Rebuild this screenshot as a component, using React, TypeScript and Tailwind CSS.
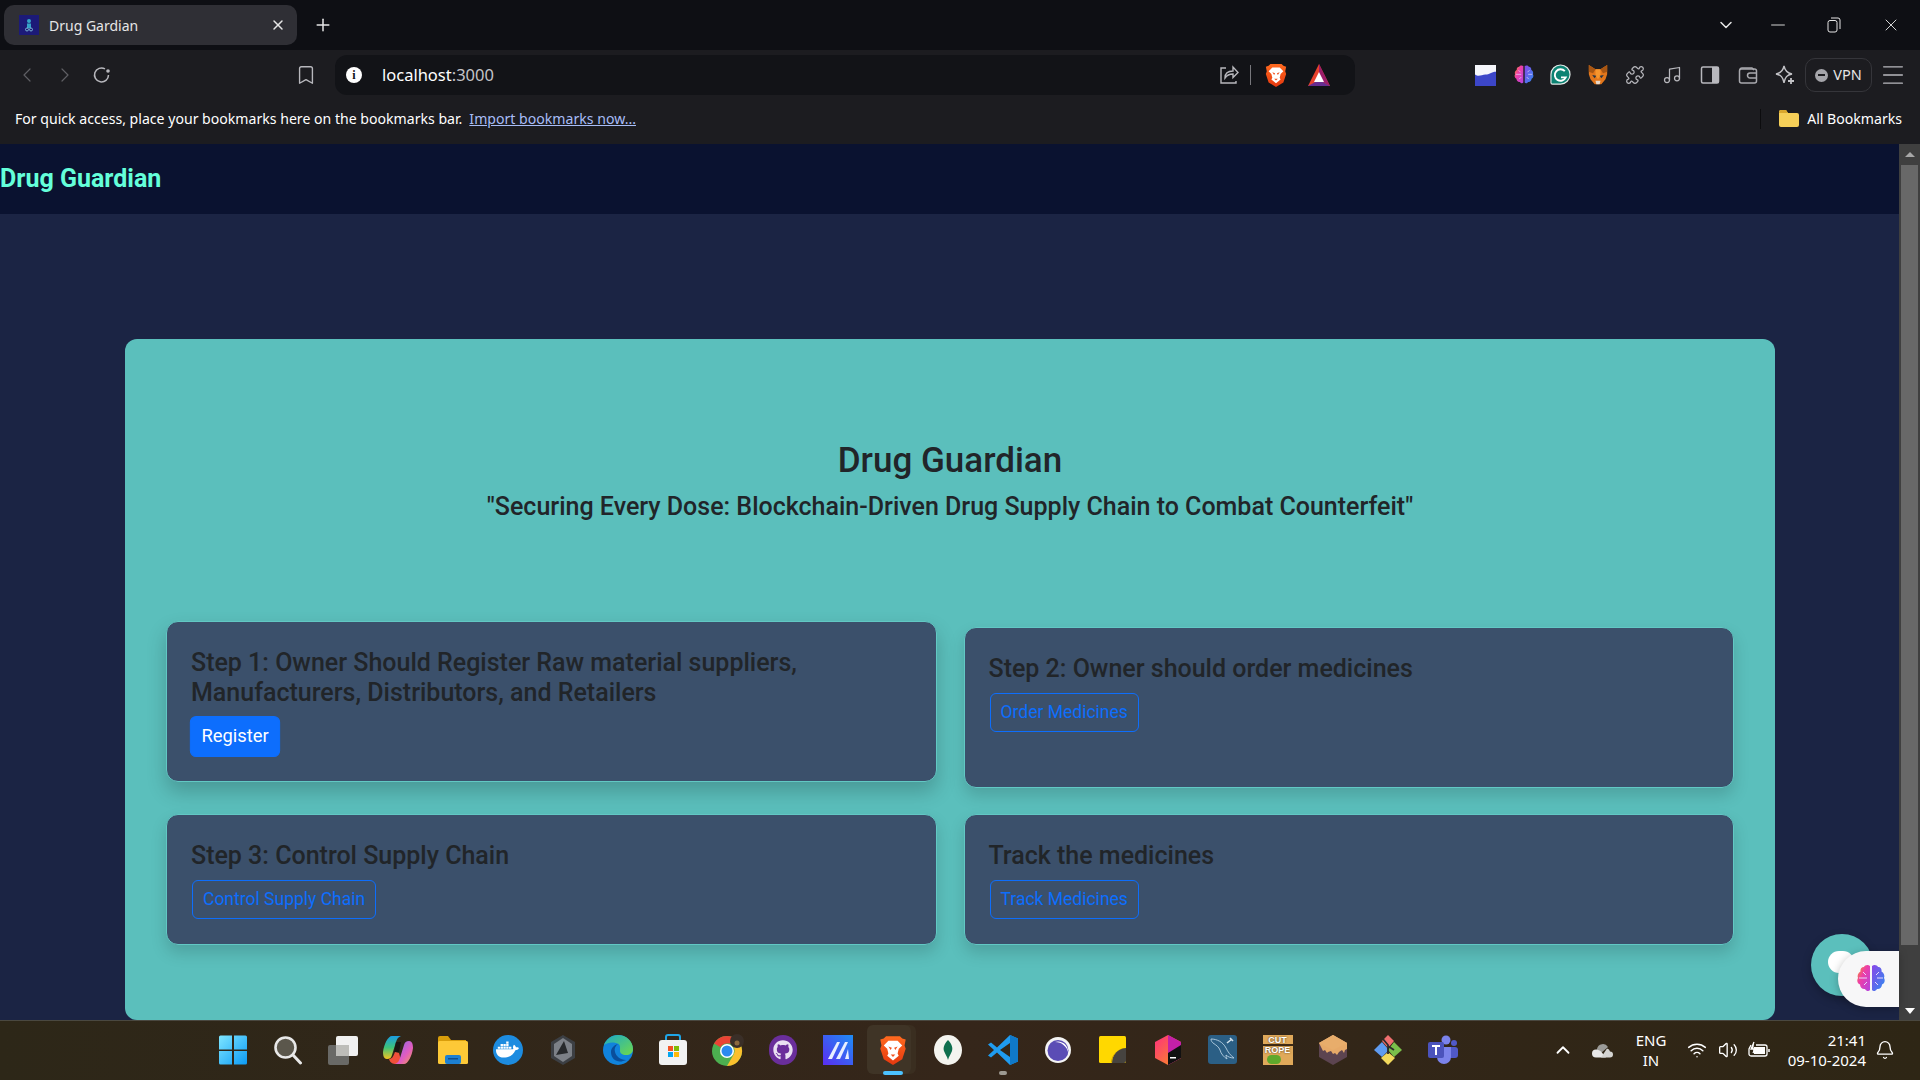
import { Bell, Bookmark, ChevronDown, ChevronLeft, ChevronRight, ChevronUp, Menu, Minus, Music, Plus, Puzzle, Volume2, Wifi, X } from 'lucide-react';
import { FaDocker, FaGithub } from 'react-icons/fa6';

function BrainIcon({ size = 26 }: { size?: number }) {
  return (
    <svg width={size} height={size} viewBox="0 0 32 32">
      <defs>
        <linearGradient id="brainL" x1="0" y1="0" x2="1" y2="1">
          <stop offset="0" stopColor="#f7941d" />
          <stop offset="0.4" stopColor="#ee3fa6" />
          <stop offset="1" stopColor="#b443e0" />
        </linearGradient>
        <linearGradient id="brainR" x1="0" y1="0" x2="1" y2="1">
          <stop offset="0" stopColor="#8a46e8" />
          <stop offset="1" stopColor="#2f8cf0" />
        </linearGradient>
      </defs>
      <path d="M15 3c-2-1.600-5-1-6 1-2.500 0-4 2-3.500 4.500C3 10 2 12.500 3 15c-1.500 2.500-.5 5.500 2 6.500 0 3 2.500 5 5 4.500 1.500 2.500 4 2.500 5 1z" fill="url(#brainL)" />
      <path d="M17 3c2-1.600 5-1 6 1 2.500 0 4 2 3.500 4.500C29 10 30 12.500 29 15c1.500 2.500.5 5.500-2 6.500 0 3-2.500 5-5 4.500-1.500 2.500-4 2.500-5 1z" fill="url(#brainR)" />
      <path d="M4 15h8M8 9l3 3M9 22l3-3M28 15h-6M24 9l-3 3M23 22l-3-3" stroke="#e9d8fb" strokeWidth="1" fill="none" />
    </svg>
  );
}

function BraveLion({ size = 24 }: { size?: number }) {
  return (
    <svg width={size} height={size} viewBox="0 0 24 26">
      <defs>
        <linearGradient id="braveG" x1="0" y1="0" x2="0" y2="1">
          <stop offset="0" stopColor="#ff6a1f" />
          <stop offset="1" stopColor="#e5380f" />
        </linearGradient>
      </defs>
      <path d="M6 1h12l2 2 3 1-1 5 1 3-3 9-8 5-8-5-3-9 1-3-1-5 3-1z" fill="url(#braveG)" />
      <path d="M8 5h8l4 4-3 3-1 4 1 2-5 4-5-4 1-2-1-4-3-3z" fill="#fff" />
      <path d="M8 10l3 1-1 2zM16 10l-3 1 1 2zM10 17h4l-2 2z" fill="#f1521f" />
    </svg>
  );
}

function BatIcon() {
  return (
    <svg width="24" height="24" viewBox="0 0 24 24">
      <polygon points="12,1 23,23 1,23" fill="#e8412c" />
      <polygon points="12,1 23,23 12,17" fill="#9b1d6a" />
      <polygon points="1,23 23,23 12,17" fill="#662d91" />
      <polygon points="12,9 17,19 7,19" fill="#fff" />
    </svg>
  );
}

function FoxIcon() {
  return (
    <svg width="20" height="20" viewBox="0 0 24 24">
      <polygon points="1,0 9,5 15,5 23,0 23,11 21,17 16,23 8,23 3,17 1,11" fill="#e2761b" />
      <polygon points="9,5 15,5 15,13 12,17 9,13" fill="#f6952d" />
      <polygon points="1,0 9,5 6,10 1,8" fill="#a85613" />
      <polygon points="23,0 15,5 18,10 23,8" fill="#a85613" />
      <polygon points="5,12 10,13 8,16" fill="#233447" />
      <polygon points="19,12 14,13 16,16" fill="#233447" />
      <polygon points="9,19 15,19 14,23 10,23" fill="#e8d8c8" />
    </svg>
  );
}

function GIcon() {
  return (
    <svg width="21" height="22" viewBox="0 0 22 23">
      <path d="M11 1a10 10 0 1 1 0 20H2.500A1.500 1.500 0 0 1 1 19.500V11A10 10 0 0 1 11 1z" fill="#0d8373" stroke="#e3ebe9" strokeWidth="1.200" />
      <path d="M15.500 7.500a6 6 0 1 0 1 6.500h-5" fill="none" stroke="#fff" strokeWidth="2" />
    </svg>
  );
}

function Ext1() {
  return (
    <svg width="21" height="21" viewBox="0 0 22 22">
      <rect width="22" height="22" fill="#f5f6fb" />
      <path d="M0 10c4 3 7 0 11 0 4 0 6-3 11-3v15H0z" fill="#3c46c8" />
    </svg>
  );
}

function ReloadIcon() {
  return (
    <svg width="20" height="20" viewBox="0 0 20 20" fill="none" stroke="#b8b8bd" strokeWidth="1.500">
      <path d="M16.500 10a7 7 0 1 1-3.500-6.100" />
      <circle cx="16" cy="6" r="1.800" fill="#b8b8bd" stroke="none" />
    </svg>
  );
}

function ShareIcon() {
  return (
    <svg width="20" height="20" viewBox="0 0 20 20" fill="none" stroke="#b8b8bd" strokeWidth="1.400">
      <path d="M7 3H2v15h15v-2" />
      <path d="M6 13c0-5 3-7 8-7V2l5 5.500-5 5V9c-4 0-6 1-8 4z" />
    </svg>
  );
}

function SidebarIcon() {
  return (
    <svg width="20" height="20" viewBox="0 0 20 20">
      <rect x="1.500" y="2" width="17" height="16" rx="1.500" fill="none" stroke="#b8b8bd" strokeWidth="1.500" />
      <rect x="12" y="2" width="6.500" height="16" fill="#b8b8bd" />
    </svg>
  );
}

function WalletIcon() {
  return (
    <svg width="20" height="20" viewBox="0 0 20 20" fill="none" stroke="#a9a9ae" strokeWidth="1.500">
      <path d="M2 5a2 2 0 0 1 2-2h10l2 2" />
      <rect x="1.500" y="4" width="17" height="14" rx="2" />
      <path d="M18.500 8H12a2 2 0 0 0 0 5h6.500" />
    </svg>
  );
}

function SparkleIcon() {
  return (
    <svg width="20" height="20" viewBox="0 0 20 20" fill="none" stroke="#c2c2c6" strokeWidth="1.400">
      <path d="M9 1c1 5 3 7 8 8-5 1-7 3-8 9-1-6-3-8-8-9 5-1 7-3 8-8z" />
      <path d="M16 13v6M13 16h6" strokeWidth="1.800" />
    </svg>
  );
}

function RestoreIcon() {
  return (
    <svg width="14" height="16" viewBox="0 0 14 16" fill="none" stroke="#e6e6e6" strokeWidth="1">
      <rect x="1" y="3.500" width="9" height="11.500" rx="2" />
      <path d="M4 1h7a2 2 0 0 1 2 2v9" />
    </svg>
  );
}

function Favicon() {
  return (
    <svg width="20" height="20" viewBox="0 0 20 20">
      <rect width="20" height="20" fill="#1c1a78" />
      <circle cx="10" cy="6" r="2" fill="#35a3c8" />
      <rect x="8" y="8.500" width="4" height="4.500" fill="#35a3c8" />
      <circle cx="8" cy="14.500" r="1.500" fill="none" stroke="#8bd1e6" strokeWidth="0.800" />
      <circle cx="12" cy="14.500" r="1.500" fill="none" stroke="#8bd1e6" strokeWidth="0.800" />
    </svg>
  );
}

function TaskWindows() {
  return (
    <svg width="30" height="30" viewBox="0 0 30 30">
      <defs>
        <linearGradient id="winG" x1="0" y1="0" x2="1" y2="1">
          <stop offset="0" stopColor="#7fe6ff" />
          <stop offset="1" stopColor="#0c9bf5" />
        </linearGradient>
      </defs>
      <path d="M1 2a1.500 1.500 0 0 1 1.500-1.500h11.500v14H1zM16 .5h11.500A1.500 1.500 0 0 1 29 2v12.500H16zM1 16h13v13.500H2.500A1.500 1.500 0 0 1 1 28zM16 16h13v12a1.500 1.500 0 0 1-1.500 1.500H16z" fill="url(#winG)" />
    </svg>
  );
}

function TaskSearch() {
  return (
    <svg width="30" height="30" viewBox="0 0 30 30">
      <circle cx="12.500" cy="12.500" r="10" fill="#5b574c" stroke="#e8e8e8" strokeWidth="2.600" />
      <path d="M20 20l7.500 8" stroke="#e8e8e8" strokeWidth="3" strokeLinecap="round" />
    </svg>
  );
}

function TaskView() {
  return (
    <svg width="32" height="32" viewBox="0 0 32 32">
      <rect x="1" y="11" width="21" height="20" rx="2" fill="#696966" />
      <rect x="9" y="2" width="22" height="20" rx="2" fill="#f1f1f1" />
      <rect x="9" y="11" width="13" height="11" fill="#bdbdb9" />
    </svg>
  );
}

function TaskCopilot() {
  return (
    <svg width="30" height="30" viewBox="0 0 30 30">
      <defs>
        <linearGradient id="copA" x1="0" y1="0" x2="0" y2="1">
          <stop offset="0" stopColor="#1b9de2" />
          <stop offset="0.5" stopColor="#3dc27a" />
          <stop offset="1" stopColor="#f4c41f" />
        </linearGradient>
        <linearGradient id="copB" x1="0" y1="0" x2="1" y2="1">
          <stop offset="0" stopColor="#7b6cf0" />
          <stop offset="0.6" stopColor="#e25cc0" />
          <stop offset="1" stopColor="#f0a04d" />
        </linearGradient>
      </defs>
      <path d="M13 29c-3 0-6-1-7-5 3 0 4-2 6-7l4 1 3 11z" fill="#f0503a" />
      <path d="M9 1h9c-3 1-4 3-5 6l-4 13c-1 3-2 4-5 4-3 0-4-3-4-7C1 9 5 1 9 1z" fill="url(#copA)" />
      <path d="M21 29h-9c3-1 4-3 5-6l4-13c1-3 2-4 5-4 3 0 4 3 4 7-1 8-5 16-9 16z" fill="url(#copB)" />
      <path d="M13 7h5l-2 10h-5z" fill="#1a1512" />
    </svg>
  );
}

function TaskExplorer() {
  return (
    <svg width="30" height="30" viewBox="0 0 30 30">
      <path d="M0 3a2 2 0 0 1 2-2h8l3 4h15v6H0z" fill="#d99e0b" />
      <rect y="6" width="30" height="23" rx="1.500" fill="#fdc937" />
      <rect x="7" y="20" width="16" height="9" rx="2" fill="#1d80d2" />
      <rect x="10" y="23" width="10" height="1.500" fill="#0f4f8e" />
    </svg>
  );
}

function TaskDocker() {
  return (
    <span className="flex h-[30px] w-[30px] items-center justify-center rounded-full bg-[#1d8ce0]">
      <FaDocker size={23} color="#fff" />
    </span>
  );
}

function TaskHex() {
  return (
    <svg width="26" height="30" viewBox="0 0 26 30">
      <polygon points="13,0 25,7 25,23 13,30 1,23 1,7" fill="#3c3f44" />
      <polygon points="13,3 22,9 22,21 13,27 4,21 4,9" fill="#7c8087" />
      <polygon points="14,6 18,18 6,20" fill="#27292c" />
    </svg>
  );
}

function TaskEdge() {
  return (
    <svg width="30" height="30" viewBox="0 0 30 30">
      <defs>
        <linearGradient id="edgeA" x1="0" y1="0" x2="1" y2="1">
          <stop offset="0" stopColor="#1aa9c9" />
          <stop offset="1" stopColor="#6fd94b" />
        </linearGradient>
      </defs>
      <circle cx="15" cy="15" r="15" fill="#1183dc" />
      <path d="M1 10C3 4 9 0 15 0c8 0 15 6 15 14 0 4-3 6-7 6-4 0-6-2-6-4 0-4 1-7-4-8-5-1-9 0-12 2z" fill="url(#edgeA)" />
      <path d="M20 26c-6 2-12-2-12-9 0-4 3-7 7-8-3 2-4 5-3 8 1 4 5 8 11 8 2 0 4-1 6-3-2 2-5 3-9 4z" fill="#0a4e9b" />
    </svg>
  );
}

function TaskStore() {
  return (
    <svg width="30" height="32" viewBox="0 0 30 32">
      <path d="M8 7V3a2 2 0 0 1 2-2h10a2 2 0 0 1 2 2v4" fill="none" stroke="#1fa5e6" strokeWidth="2" />
      <rect x="1" y="6" width="28" height="25" rx="3" fill="#f2f2f2" />
      <rect x="10" y="12" width="5" height="5" fill="#f35325" />
      <rect x="16" y="12" width="5" height="5" fill="#81bc06" />
      <rect x="10" y="18" width="5" height="5" fill="#05a6f0" />
      <rect x="16" y="18" width="5" height="5" fill="#ffba08" />
    </svg>
  );
}

function TaskChrome() {
  return (
    <svg width="32" height="32" viewBox="0 0 32 32">
      <circle cx="15" cy="17" r="15" fill="#4caf50" />
      <path d="M15 2a15 15 0 0 1 13 7.500H15a7.500 7.500 0 0 0-6.500 3.700L2 9.500A15 15 0 0 1 15 2z" fill="#ea4335" />
      <path d="M28 9.500A15 15 0 0 1 15 32l6.500-11.300A7.500 7.500 0 0 0 21.500 13z" fill="#fbc02d" />
      <circle cx="15" cy="17" r="7" fill="#fff" />
      <circle cx="15" cy="17" r="5.500" fill="#2b8af0" />
      <circle cx="25" cy="7" r="7" fill="#3a2f28" />
      <circle cx="25" cy="9" r="2.500" fill="#8c6a3f" />
    </svg>
  );
}

function TaskGithub() {
  return (
    <span className="flex h-[30px] w-[28px] items-center justify-center rounded-full bg-[#6a2e9b]">
      <FaGithub size={20} color="#e9e0f2" />
    </span>
  );
}

function TaskLinear() {
  return (
    <svg width="30" height="30" viewBox="0 0 30 30">
      <defs>
        <linearGradient id="linA" x1="0" y1="1" x2="1" y2="0">
          <stop offset="0" stopColor="#5a2df0" />
          <stop offset="1" stopColor="#1e8df5" />
        </linearGradient>
      </defs>
      <rect width="30" height="30" fill="url(#linA)" />
      <polygon points="5,24 14,7 17,7 9,24" fill="#e8efff" />
      <polygon points="13,24 22,7 25,7 17,24" fill="#e8efff" />
      <polygon points="22,24 25,14 26,24" fill="#e8efff" />
    </svg>
  );
}

function TaskCompass() {
  return (
    <svg width="28" height="30" viewBox="0 0 28 30">
      <ellipse cx="14" cy="15" rx="14" ry="15" fill="#f4f4ef" />
      <path d="M14 5c4 4 5 8 4 11-1 3-3 5-4 9-1-4-3-6-4-9-1-3 0-7 4-11z" fill="#0f6f4e" />
    </svg>
  );
}

function TaskVscode() {
  return (
    <svg width="30" height="30" viewBox="0 0 30 30">
      <path d="M22 0l8 3.500v23L22 30 9 17.500 3 22.500 0 20.500 6 15 0 9.500 3 7.500 9 12.500z" fill="#1f9cf0" />
      <path d="M22 8L12 15l10 7z" fill="#33281a" />
      <path d="M22 0l8 3.500v23L22 30z" fill="#0f79c9" />
    </svg>
  );
}

function TaskEclipse() {
  return (
    <svg width="26" height="26" viewBox="0 0 26 26">
      <circle cx="13" cy="13" r="13" fill="#f4f4f4" />
      <circle cx="13" cy="13.500" r="10.500" fill="#5b4db5" />
      <path d="M10 5a10 10 0 0 1 13 10c-1-5-6-10-13-10z" fill="#fff" />
    </svg>
  );
}

function TaskSticky() {
  return (
    <svg width="27" height="27" viewBox="0 0 27 27">
      <rect width="27" height="27" rx="1.500" fill="#ffd800" />
      <path d="M27 12v13a2 2 0 0 1-2 2H13c0-8 6-15 14-15z" fill="#46433f" />
      <path d="M27 12c-8 0-14 7-14 15l-1-1c1-8 7-13 15-14z" fill="#c79a00" />
    </svg>
  );
}

function TaskJetbrains() {
  return (
    <svg width="26" height="30" viewBox="0 0 26 30">
      <defs>
        <linearGradient id="jbA" x1="0" y1="0" x2="1" y2="1">
          <stop offset="0" stopColor="#ff2f7e" />
          <stop offset="1" stopColor="#f7941d" />
        </linearGradient>
      </defs>
      <polygon points="13,0 26,7 26,23 13,30 0,23 0,7" fill="url(#jbA)" />
      <polygon points="13,0 26,7 26,23 13,30 13,14" fill="#c320a8" />
      <polygon points="26,10 26,23 13,30 13,18" fill="#111" />
      <rect x="15" y="22" width="6" height="1.500" fill="#fff" />
    </svg>
  );
}

function TaskMysql() {
  return (
    <svg width="29" height="29" viewBox="0 0 29 29">
      <rect width="29" height="29" rx="3" fill="#2b5f85" />
      <path d="M3 4c6 0 12 3 15 9 2 4 4 7 8 10-3 0-6-1-8-3 0 2 1 3 1 4-3-2-6-5-7-9-1-3-4-5-7-7-1-1-2-2-2-4z" fill="none" stroke="#b7d0e2" strokeWidth="0.900" />
      <path d="M19 8l5-4M22 3l3 3" stroke="#d3e2ec" strokeWidth="1.600" />
    </svg>
  );
}

function TaskCutRope() {
  return (
    <span className="flex h-[30px] w-[30px] flex-col items-center overflow-hidden bg-[#e0a95a] pt-[1px] font-['Liberation_Sans',sans-serif] text-[9px] leading-[8px] font-bold text-white">
      <span className="[text-shadow:0_0_2px_#3d2a16]">CUT</span>
      <span className="h-[2px] w-full bg-[#3d2a16]" />
      <span className="[text-shadow:0_0_2px_#3d2a16]">ROPE</span>
      <span className="mt-[1px] mr-[8px] h-[9px] w-[14px] rounded-full bg-[#5fa82c]" />
    </span>
  );
}

function TaskBox() {
  return (
    <svg width="28" height="30" viewBox="0 0 28 30">
      <polygon points="14,0 28,8 28,22 14,30 0,22 0,8" fill="#5c4450" />
      <path d="M0 8l14-8 14 8v6l-2 1-1 3-2-3-3 2-2 3-2-2-2 1-2-3-3 1-1 1-2-3-2 1z" fill="#e6a968" />
      <polygon points="14,0 28,8 14,15 0,8" fill="#e8ad6b" />
    </svg>
  );
}

function TaskGit() {
  return (
    <svg width="30" height="30" viewBox="0 0 30 30">
      <polygon points="9,7 16,15 9,22 1,15" fill="#5f9bf0" />
      <polygon points="21,7 29,15 21,22 15,15" fill="#7ac04a" />
      <polygon points="15,17 22,23 15,30 8,23" fill="#f2d95c" />
      <polygon points="15,0 21,6 15,13 9,6" fill="#ef6f6f" />
      <path d="M10 4l5 6v9M15 11l6 4" stroke="#2b2b2b" strokeWidth="1.800" fill="none" />
    </svg>
  );
}

function TaskTeams() {
  return (
    <svg width="30" height="30" viewBox="0 0 30 30">
      <circle cx="18" cy="5" r="4.500" fill="#7b83eb" />
      <circle cx="26" cy="8" r="3" fill="#5059c9" />
      <rect x="20" y="12" width="10" height="11" rx="3" fill="#5059c9" />
      <path d="M9 12h14v10a7 7 0 0 1-14 0z" fill="#7b83eb" />
      <rect x="0" y="7" width="16" height="16" rx="2" fill="#4b53bc" />
      <path d="M4 11h8M8 11v9" stroke="#fff" strokeWidth="2" fill="none" />
    </svg>
  );
}

function OneDrive() {
  return (
    <svg width="22" height="16" viewBox="0 0 22 16">
      <path d="M5 7a6 6 0 0 1 11-2l-7 6-5-2z" fill="#9b9b98" />
      <path d="M4 15.500a4 4 0 0 1 0-8c2 0 4 1 5 2l5 6z" fill="#e8e8e8" />
      <path d="M9 15.500l6-9a4 4 0 0 1 3 3 3 3 0 0 1 0 6z" fill="#d4d4d2" />
    </svg>
  );
}

function BatteryCharging() {
  return (
    <svg width="22" height="18" viewBox="0 0 22 18" fill="none" stroke="#fff" strokeWidth="1.300">
      <path d="M8 4h9a2 2 0 0 1 2 2v7a2 2 0 0 1-2 2H3a2 2 0 0 1-2-2V8l2-4" />
      <path d="M21 8v3" strokeWidth="1.500" />
      <path d="M6 1L3 8h4l-2 4" fill="#fff" />
      <rect x="6" y="6" width="11" height="7" fill="#fff" stroke="none" />
    </svg>
  );
}

const taskIcons = [
  { id: 'win', icon: <TaskWindows /> },
  { id: 'search', icon: <TaskSearch /> },
  { id: 'view', icon: <TaskView /> },
  { id: 'copilot', icon: <TaskCopilot /> },
  { id: 'explorer', icon: <TaskExplorer /> },
  { id: 'docker', icon: <TaskDocker /> },
  { id: 'hex', icon: <TaskHex /> },
  { id: 'edge', icon: <TaskEdge /> },
  { id: 'store', icon: <TaskStore /> },
  { id: 'chrome', icon: <TaskChrome /> },
  { id: 'github', icon: <TaskGithub /> },
  { id: 'linear', icon: <TaskLinear /> },
  { id: 'brave', icon: <BraveLion size={30} /> },
  { id: 'compass', icon: <TaskCompass /> },
  { id: 'vscode', icon: <TaskVscode /> },
  { id: 'eclipse', icon: <TaskEclipse /> },
  { id: 'sticky', icon: <TaskSticky /> },
  { id: 'jetbrains', icon: <TaskJetbrains /> },
  { id: 'mysql', icon: <TaskMysql /> },
  { id: 'cut', icon: <TaskCutRope /> },
  { id: 'box', icon: <TaskBox /> },
  { id: 'git', icon: <TaskGit /> },
  { id: 'teams', icon: <TaskTeams /> },
];

function StepCard({ title, action, filled, lifted }: { title: string; action: string; filled?: boolean; lifted?: boolean }) {
  return (
    <div
      className={`flex flex-col items-start rounded-[12px] border border-[#62c8c4] bg-[#3b506b] px-[24px] py-[25px] ${
        lifted ? '-translate-y-[6px] shadow-[0_10px_20px_rgba(0,0,0,0.2)]' : 'shadow-[0_8px_16px_rgba(0,0,0,0.15)]'
      }`}
    >
      <h4 className="mb-[9px] pt-[1px] text-[25px] leading-[30px] font-medium text-[#212529]">{title}</h4>
      {filled ? (
        <button className="ml-[1px] h-[39px] scale-105 rounded-[6px] border border-[#0d6efd] bg-[#0d6efd] px-[10px] text-[17.500px] text-white">{action}</button>
      ) : (
        <button className="ml-[1px] h-[39px] rounded-[6px] border border-[#0d6efd] px-[10px] text-[17.500px] text-[#0d6efd]">{action}</button>
      )}
    </div>
  );
}

export default function App() {
  return (
    <div className="flex h-[1080px] w-[1920px] flex-col overflow-hidden bg-[#1b2444] font-['Noto_Sans',sans-serif]">
      {/* tab strip */}
      <div className="flex h-[50px] shrink-0 items-center bg-[#0e0f14] pl-[4px] text-[#e6e6e6]">
        <div className="flex h-[40px] w-[293px] items-center rounded-[10px] bg-[#2f2f35] pr-[11px] pl-[15px]">
          <Favicon />
          <span className="ml-[10px] flex-1 text-[14px]">Drug Gardian</span>
          <X size={16} strokeWidth={2.2} />
        </div>
        <Plus size={20} strokeWidth={1.8} className="ml-[16px]" />
        <div className="flex-1" />
        <ChevronDown size={20} strokeWidth={1.8} />
        <Minus size={22} strokeWidth={1} className="ml-[31px]" />
        <span className="ml-[38px]"><RestoreIcon /></span>
        <X size={20} strokeWidth={1.1} className="mr-[19px] ml-[40px]" />
      </div>

      {/* toolbar */}
      <div className="flex h-[50px] shrink-0 items-center bg-[#1c1c20] text-[#b8b8bd]">
        <ChevronLeft size={24} strokeWidth={1.2} className="ml-[15px] text-[#5f5f64]" />
        <ChevronRight size={24} strokeWidth={1.2} className="ml-[14px] text-[#5f5f64]" />
        <span className="ml-[15px]"><ReloadIcon /></span>
        <Bookmark size={22} strokeWidth={1.5} className="ml-[183px]" />
        <div className="ml-[18px] flex h-[40px] w-[1020px] items-center rounded-[12px] bg-[#121317] pr-[24px] pl-[11px]">
          <span className="flex h-[16px] w-[16px] items-center justify-center rounded-full bg-white font-['Liberation_Serif',serif] text-[12px] font-bold text-[#121317]">i</span>
          <span className="ml-[20px] flex-1 text-[16.500px] text-white">
            localhost<span className="text-[#c4c4c8]">:3000</span>
          </span>
          <ShareIcon />
          <span className="mr-[13px] ml-[11px] h-[20px] w-px bg-[#77777c]" />
          <BraveLion size={24} />
          <span className="ml-[19px]"><BatIcon /></span>
        </div>
        <span className="ml-[120px]"><Ext1 /></span>
        <span className="ml-[17px]"><BrainIcon size={22} /></span>
        <span className="ml-[15px]"><GIcon /></span>
        <span className="ml-[17px]"><FoxIcon /></span>
        <Puzzle size={20} strokeWidth={1.5} className="ml-[17px]" />
        <Music size={20} strokeWidth={1.5} className="ml-[17px]" />
        <span className="ml-[18px]"><SidebarIcon /></span>
        <span className="ml-[18px]"><WalletIcon /></span>
        <span className="ml-[17px]"><SparkleIcon /></span>
        <div className="ml-[10px] flex h-[34px] w-[67px] items-center justify-center rounded-[10px] border border-[#35353a] text-[14.500px] text-[#e6e6e6]">
          <span className="mr-[5px] flex h-[13px] w-[13px] items-center justify-center rounded-full bg-[#a5a5aa]">
            <span className="h-[2px] w-[7px] bg-[#1c1c20]" />
          </span>
          VPN
        </div>
        <Menu size={28} strokeWidth={1.2} className="ml-[7px]" />
      </div>

      {/* bookmarks bar */}
      <div className="flex h-[44px] shrink-0 items-center bg-[#1c1c20] pr-[18px] pb-[7px] pl-[15px] text-[14.100px] text-white">
        <span>For quick access, place your bookmarks here on the bookmarks bar.</span>
        <span className="ml-[7px] text-[#a8bdf7] underline">Import bookmarks now...</span>
        <div className="flex-1" />
        <span className="mr-[18px] h-[20px] w-px bg-[#0c0c0e]" />
        <svg width="20" height="17" viewBox="0 0 20 17">
          <path d="M0 2a2 2 0 0 1 2-2h5l2 3h9a2 2 0 0 1 2 2v10a2 2 0 0 1-2 2H2a2 2 0 0 1-2-2z" fill="#f5cf58" />
          <path d="M0 2a2 2 0 0 1 2-2h5l2 3H0z" fill="#d9a72d" />
        </svg>
        <span className="ml-[8px]">All Bookmarks</span>
      </div>

      {/* page viewport */}
      <div className="relative flex min-h-0 flex-1">
        <div className="min-w-0 flex-1 overflow-hidden font-['Roboto',sans-serif]">
          <nav className="flex h-[70px] items-center bg-[#0a1230] text-[25px] font-bold text-[#64ffda]">Drug Guardian</nav>
          <main className="pt-[125px] pl-[125px]">
            <div className="h-[681px] w-[1650px] rounded-[12px] bg-[#5bbfbc] px-[41px] pt-[100px]">
              <div className="mb-[105px] text-center">
                <h1 className="mb-[9px] text-[35px] leading-[44px] font-medium text-[#212529]">Drug Guardian</h1>
                <p className="text-[25px] leading-[30px] font-medium text-[#212529]">
                  "Securing Every Dose: Blockchain-Driven Drug Supply Chain to Combat Counterfeit"
                </p>
              </div>
              <div className="grid grid-cols-2 gap-x-[27px] gap-y-[26px]">
                <StepCard title="Step 1: Owner Should Register Raw material suppliers, Manufacturers, Distributors, and Retailers" action="Register" filled lifted />
                <StepCard title="Step 2: Owner should order medicines" action="Order Medicines" />
                <StepCard title="Step 3: Control Supply Chain" action="Control Supply Chain" />
                <StepCard title="Track the medicines" action="Track Medicines" />
              </div>
            </div>
          </main>
        </div>

        {/* scrollbar */}
        <div className="flex w-[21px] shrink-0 flex-col items-center bg-[#3f3f3f]">
          <span className="mt-[8px] h-0 w-0 border-x-[5px] border-b-[5px] border-x-transparent border-b-[#a8a8a8]" />
          <div className="mt-[8px] h-[780px] w-[17px] bg-[#686868]" />
          <div className="flex-1" />
          <span className="mb-[6px] h-0 w-0 border-x-[5px] border-t-[6px] border-x-transparent border-t-white" />
        </div>

        {/* floating chat and extension widgets */}
        <div className="absolute top-[790px] left-[1811px] h-[62px] w-[62px] rounded-full bg-[#5bbfbc] shadow-[0_4px_10px_rgba(0,0,0,0.25)]" />
        <div className="absolute top-[807px] left-[1828px] h-[22px] w-[26px] rounded-full bg-white" />
        <div className="absolute top-[807px] left-[1838px] flex h-[56px] w-[61px] items-center justify-end rounded-l-[28px] bg-[#f7f7f8] pr-[12px] shadow-[0_2px_8px_rgba(0,0,0,0.25)]">
          <BrainIcon size={32} />
        </div>
      </div>

      {/* taskbar */}
      <div className="flex h-[60px] shrink-0 items-center border-t border-[#4a4840] bg-gradient-to-r from-[#2d2718] via-[#35261a] to-[#2e2615] pb-[2px] pl-[205px] text-white">
        {taskIcons.map((t) => (
          <div key={t.id} className="relative flex h-[55px] w-[55px] items-center justify-center">
            {t.id === 'brave' && <div className="absolute top-[3px] right-[9px] bottom-[3px] left-[2px] rounded-[6px] bg-[#3f3426] shadow-[5px_0_0_#3a2e20]" />}
            <span className="relative flex items-center justify-center">{t.icon}</span>
            {t.id === 'brave' && <span className="absolute bottom-[2px] h-[4px] w-[20px] rounded-full bg-[#4cc2ff]" />}
            {t.id === 'vscode' && <span className="absolute bottom-[2px] h-[4px] w-[8px] rounded-full bg-[#9d9a92]" />}
          </div>
        ))}
        <ChevronUp size={22} strokeWidth={2} className="ml-[82px]" />
        <span className="ml-[18px]"><OneDrive /></span>
        <div className="ml-[9px] w-[56px] text-center text-[15px] leading-[20px]">
          <div>ENG</div>
          <div>IN</div>
        </div>
        <Wifi size={20} strokeWidth={1.8} className="ml-[8px]" />
        <Volume2 size={20} strokeWidth={1.6} className="ml-[11px]" />
        <span className="ml-[10px]"><BatteryCharging /></span>
        <div className="ml-[17px] w-[79px] text-right text-[15px] leading-[20px] whitespace-nowrap">
          <div>21:41</div>
          <div>09-10-2024</div>
        </div>
        <Bell size={20} strokeWidth={1.6} className="ml-[9px]" />
      </div>
    </div>
  );
}
